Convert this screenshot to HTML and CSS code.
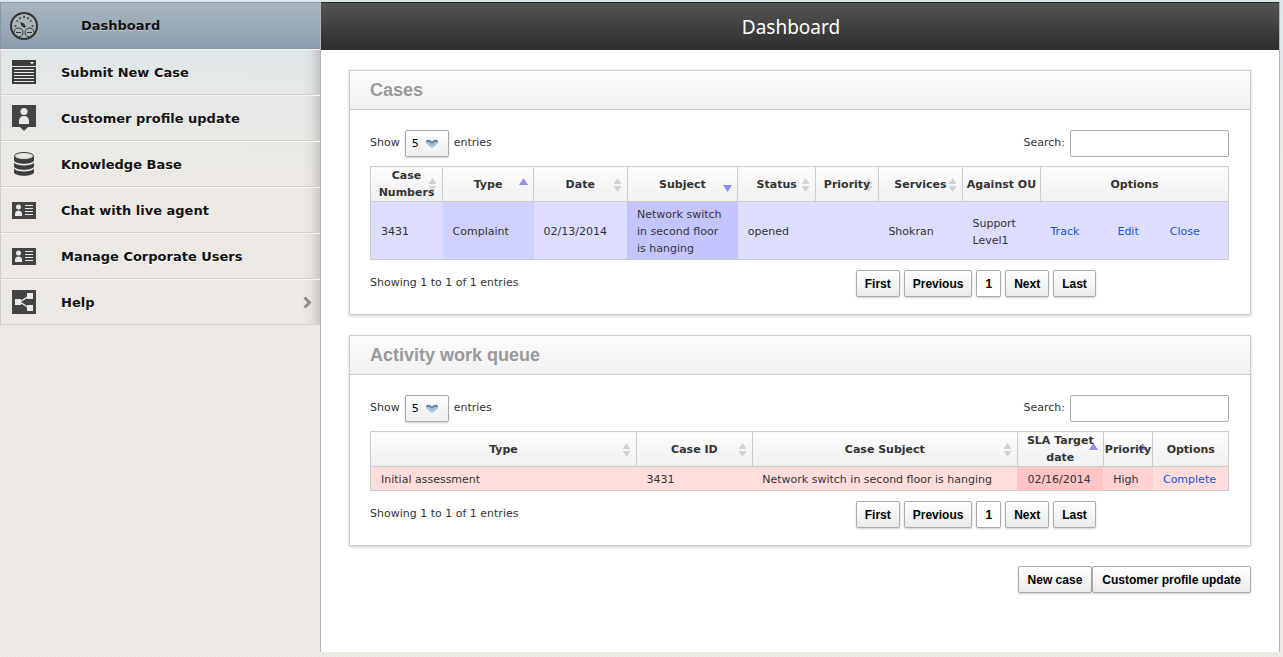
FILE: index.html
```html
<!DOCTYPE html>
<html lang="en">
  <head>
    <meta charset="utf-8" />
    <title>Dashboard</title>
    <link rel="stylesheet" href="styles.css">
  </head>
  <body>
    <!-- Shared icons -->
    <svg class="icon-defs" width="0" height="0">
      <symbol id="sort-both" viewBox="0 0 9 14">
        <path d="M4.500 0L8.500 6H.5zM4.500 14L.5 8h8z" fill="#d2d2d2" />
      </symbol>
      <symbol id="sort-asc" viewBox="0 0 9 14">
        <path d="M4.500 0L9 7H0z" fill="#8f8ff0" />
      </symbol>
      <symbol id="sort-desc" viewBox="0 0 9 14">
        <path d="M0 7h9l-4.500 7z" fill="#8f8ff0" />
      </symbol>
      <symbol id="select-arrow" viewBox="0 0 12 9">
        <path d="M0 3c0-3 4-3 6 0 2-3 6-3 6 0 0 2-3 4-6 6-3-2-6-4-6-6z" fill="#a3c3de" />
        <path d="M0 3c0-3 4-3 6 0 2-3 6-3 6 0v.5C10 2 8 3 6 5 4 3 2 2 0 3.500z" fill="#5f7f9e" />
      </symbol>
      <symbol id="icon-card" viewBox="0 0 24 17">
        <path d="M0 0h24v17H0z" fill="#444" />
        <circle cx="6.500" cy="5" r="2.500" fill="#eceae4" />
        <path d="M3 14v-2c0-2 1.500-3.500 3.500-3.500S10 10 10 12v2z" fill="#eceae4" />
        <path d="M13 3.500h8M13 6.500h8M13 9.500h8M13 12.500h8" stroke="#eceae4" />
      </symbol>
    </svg>

    <div class="page">
      <nav class="sidebar">
        <ul class="menu">
          <li>
            <a href="#" class="menu-link active">
              <span class="menu-icon">
                <svg width="28" height="28" viewBox="0 0 28 28" fill="none" stroke="#333">
                  <circle cx="14" cy="14" r="13" stroke-width="2" fill="#a9b5b8" />
                  <path d="M4.500 14h2M6.500 8.500l1.500 1M9.500 5.500l1 1.500M14 4v2M18.500 5.500l-1 1.500M21.500 8.500l-1.500 1M23.500 14h-2" stroke-width="1.500" />
                  <circle cx="8.500" cy="20.500" r="4.500" />
                  <circle cx="19.500" cy="20.500" r="4.500" />
                  <path d="M6 20.500h5M17 20.500h5" />
                  <path d="M10 10l4 1.500 2 3-1.500 1.500-3-2z" fill="#333" stroke="none" />
                </svg>
              </span>
              <span class="menu-text">Dashboard</span>
            </a>
          </li>
          <li>
            <a href="#" class="menu-link">
              <span class="menu-icon">
                <svg width="24" height="24" viewBox="0 0 24 24">
                  <path d="M0 0h24v6H0zM0 7h24v17H0z" fill="#3c3c3c" />
                  <path d="M18 2h4l-2 2.500z" fill="#eee" />
                  <path d="M2 9.500h20M2 12.500h20M2 15.500h20M2 18.500h20M2 21.500h20" stroke="#e9ebe8" />
                </svg>
              </span>
              <span class="menu-text">Submit New Case</span>
            </a>
          </li>
          <li>
            <a href="#" class="menu-link">
              <span class="menu-icon">
                <svg width="24" height="26" viewBox="0 0 24 26">
                  <path d="M0 0h24v22h-8l-4 4-4-4H0z" fill="#444" />
                  <circle cx="12" cy="6.500" r="3.500" fill="#e9e9e5" />
                  <path d="M7 19v-3c0-3 2-5 5-5s5 2 5 5v3z" fill="#e9e9e5" />
                </svg>
              </span>
              <span class="menu-text">Customer profile update</span>
            </a>
          </li>
          <li>
            <a href="#" class="menu-link">
              <span class="menu-icon">
                <svg width="24" height="24" viewBox="-2 0 24 24">
                  <path d="M0 4v4c0 5 20 5 20 0V4zM0 10.500V14c0 5 20 5 20 0v-3.500c-2 4-18 4-20 0zM0 16.500V20c0 5 20 5 20 0v-3.500c-2 4-18 4-20 0z" fill="#3c3c3c" />
                  <ellipse cx="10" cy="4" rx="9.500" ry="3.500" fill="#e6e5df" stroke="#3c3c3c" />
                </svg>
              </span>
              <span class="menu-text">Knowledge Base</span>
            </a>
          </li>
          <li>
            <a href="#" class="menu-link">
              <span class="menu-icon"><svg width="24" height="17"><use href="#icon-card" /></svg></span>
              <span class="menu-text">Chat with live agent</span>
            </a>
          </li>
          <li>
            <a href="#" class="menu-link">
              <span class="menu-icon"><svg width="24" height="17"><use href="#icon-card" /></svg></span>
              <span class="menu-text">Manage Corporate Users</span>
            </a>
          </li>
          <li>
            <a href="#" class="menu-link">
              <span class="menu-icon">
                <svg width="24" height="24" viewBox="0 0 24 24">
                  <path d="M0 0h24v24H0z" fill="#444" />
                  <path d="M3 9h6v6H3zM15 3h6v6h-6zM15 15h6v6h-6z" fill="#eceae4" />
                  <path d="M17 6l-9 6 9 6" fill="none" stroke="#eceae4" stroke-width="1.500" />
                </svg>
              </span>
              <span class="menu-text">Help</span>
              <svg class="menu-arrow" width="9" height="13" viewBox="0 0 9 13">
                <path d="M1.500 1.500l5 5-5 5" fill="none" stroke="#8d8d8b" stroke-width="3" />
              </svg>
            </a>
          </li>
        </ul>
      </nav>

      <main class="main">
        <header class="main-header">
          <h1>Dashboard</h1>
        </header>

        <div class="content">
          <!-- Cases -->
          <section class="panel">
            <h2 class="panel-title">Cases</h2>
            <div class="panel-body">
              <div class="table-controls">
                <label class="length">Show
                  <span class="select-wrap">
                    <select><option>5</option><option>10</option><option>25</option></select>
                    <svg width="12" height="9"><use href="#select-arrow" /></svg>
                  </span>
                  entries</label>
                <label class="search">Search: <input type="text" /></label>
              </div>
              <table class="data-table cases-table">
                <colgroup>
                  <col class="c-number"><col class="c-type"><col class="c-date"><col class="c-subject">
                  <col class="c-status"><col class="c-priority"><col class="c-services"><col class="c-against">
                  <col class="c-track"><col class="c-edit"><col class="c-close">
                </colgroup>
                <thead>
                  <tr>
                    <th>Case Numbers<svg class="sort"><use href="#sort-both" /></svg></th>
                    <th>Type<svg class="sort"><use href="#sort-asc" /></svg></th>
                    <th>Date<svg class="sort"><use href="#sort-both" /></svg></th>
                    <th>Subject<svg class="sort"><use href="#sort-desc" /></svg></th>
                    <th>Status<svg class="sort"><use href="#sort-both" /></svg></th>
                    <th>Priority<svg class="sort"><use href="#sort-both" /></svg></th>
                    <th>Services<svg class="sort"><use href="#sort-both" /></svg></th>
                    <th>Against OU</th>
                    <th colspan="3">Options</th>
                  </tr>
                </thead>
                <tbody>
                  <tr>
                    <td>3431</td>
                    <td class="sorted-2">Complaint</td>
                    <td>02/13/2014</td>
                    <td class="sorted-1">Network switch in second floor is hanging</td>
                    <td>opened</td>
                    <td></td>
                    <td>Shokran</td>
                    <td>Support Level1</td>
                    <td><a href="#">Track</a></td>
                    <td><a href="#">Edit</a></td>
                    <td><a href="#">Close</a></td>
                  </tr>
                </tbody>
              </table>
              <div class="table-footer">
                <p>Showing 1 to 1 of 1 entries</p>
                <div class="pagination">
                  <button class="btn">First</button>
                  <button class="btn">Previous</button>
                  <button class="btn current">1</button>
                  <button class="btn">Next</button>
                  <button class="btn">Last</button>
                </div>
              </div>
            </div>
          </section>

          <!-- Activity work queue -->
          <section class="panel">
            <h2 class="panel-title">Activity work queue</h2>
            <div class="panel-body">
              <div class="table-controls">
                <label class="length">Show
                  <span class="select-wrap">
                    <select><option>5</option><option>10</option><option>25</option></select>
                    <svg width="12" height="9"><use href="#select-arrow" /></svg>
                  </span>
                  entries</label>
                <label class="search">Search: <input type="text" /></label>
              </div>
              <table class="data-table queue-table">
                <colgroup>
                  <col class="q-type"><col class="q-id"><col class="q-subject">
                  <col class="q-target"><col class="q-priority"><col class="q-options">
                </colgroup>
                <thead>
                  <tr>
                    <th>Type<svg class="sort"><use href="#sort-both" /></svg></th>
                    <th>Case ID<svg class="sort"><use href="#sort-both" /></svg></th>
                    <th>Case Subject<svg class="sort"><use href="#sort-both" /></svg></th>
                    <th>SLA Target date<svg class="sort"><use href="#sort-asc" /></svg></th>
                    <th>Priority<svg class="sort"><use href="#sort-asc" /></svg></th>
                    <th>Options</th>
                  </tr>
                </thead>
                <tbody>
                  <tr>
                    <td>Initial assessment</td>
                    <td>3431</td>
                    <td>Network switch in second floor is hanging</td>
                    <td class="sorted-1">02/16/2014</td>
                    <td class="sorted-2">High</td>
                    <td><a href="#">Complete</a></td>
                  </tr>
                </tbody>
              </table>
              <div class="table-footer">
                <p>Showing 1 to 1 of 1 entries</p>
                <div class="pagination">
                  <button class="btn">First</button>
                  <button class="btn">Previous</button>
                  <button class="btn current">1</button>
                  <button class="btn">Next</button>
                  <button class="btn">Last</button>
                </div>
              </div>
            </div>
          </section>

          <div class="actions">
            <button class="btn">New case</button>
            <button class="btn">Customer profile update</button>
          </div>
        </div>
      </main>
    </div>
  </body>
</html>
```
FILE: styles.css
```css
* {
  margin: 0;
  padding: 0;
  box-sizing: border-box;
}

body {
  font-family: Verdana, "DejaVu Sans", sans-serif;
  font-size: 11px;
  line-height: 17px;
  color: #333;
  background:
    linear-gradient(to bottom, #dce6ea, rgba(220, 230, 234, 0) 180px),
    repeating-conic-gradient(#eae7e1 0 25%, #eeebe6 0 50%) 0 0 / 4px 4px;
}

a {
  color: #15d;
  text-decoration: none;
}

.icon-defs {
  position: absolute;
}

.page {
  display: flex;
  min-height: 100vh;
  padding: 2px 3px 5px 0;
}

/* Sidebar */
.sidebar {
  width: 320px;
  flex-shrink: 0;
}

.menu {
  list-style: none;
}

.menu-link {
  display: flex;
  align-items: center;
  height: 46px;
  padding: 0 8px 0 11px;
  border-top: 1px solid #f4f4f1;
  border-bottom: 1px solid #d0cfcb;
  border-left: 1px solid #ccc;
  background: linear-gradient(to left, rgba(0, 0, 0, 0.14), rgba(0, 0, 0, 0.03) 9px, rgba(0, 0, 0, 0) 18px);
  color: #111;
  font-size: 13px;
  font-weight: bold;
  text-shadow: 0 1px 0 #fff;
}

.menu-link.active {
  height: 47px;
  padding-left: 9px;
  border-color: #8798a5;
  background: linear-gradient(#a8b5bf, #8c9fae);
  text-shadow: 0 1px 1px #c5d0d8;
}

.menu-link.active .menu-icon {
  width: 71px;
}

.menu-icon {
  display: flex;
  width: 49px;
}

.menu-arrow {
  margin-left: auto;
}

/* Main */
.main {
  flex: 1;
  min-width: 0;
  background: #fff;
  border-left: 1px solid #b5b5b5;
  border-right: 1px solid #b5b5b5;
}

.main-header {
  height: 48px;
  padding-right: 18px;
  background: linear-gradient(#555, #2d2d2d);
  border-top: 1px solid #222;
  text-align: center;
}

.main-header h1 {
  font-family: "Noto Sans", sans-serif;
  font-size: 19px;
  font-weight: normal;
  line-height: 48px;
  color: #fff;
}

.content {
  padding: 20px 28px;
}

.panel {
  margin-bottom: 20px;
  border: 1px solid #ccc;
  box-shadow: 0 1px 3px rgba(0, 0, 0, 0.2);
}

.panel-title {
  padding: 0 20px;
  border-bottom: 1px solid #ccc;
  background: linear-gradient(#fdfdfd, #f1f1f1);
  color: #999;
  font-family: Arial, "Liberation Sans", sans-serif;
  font-size: 18px;
  line-height: 38px;
}

.panel-body {
  padding: 20px 21px 17px 20px;
}

.table-controls,
.table-footer {
  display: flex;
  justify-content: space-between;
}

.table-controls {
  margin-bottom: 9px;
}

.table-controls label {
  display: flex;
  gap: 5px;
  line-height: 26px;
}

.select-wrap {
  position: relative;
}

.select-wrap svg {
  position: absolute;
  right: 11px;
  top: 9px;
  pointer-events: none;
}

select,
.search input,
.btn {
  height: 27px;
  border: 1px solid #aaa;
  border-radius: 2px;
}

select {
  display: block;
  width: 44px;
  padding-left: 6px;
  appearance: none;
  background: linear-gradient(#fff, #ededed);
  box-shadow: 0 1px 2px rgba(0, 0, 0, 0.2);
  color: #000;
  font-family: Verdana, "DejaVu Sans", sans-serif;
  font-size: 11px;
}

.search input {
  width: 159px;
  padding: 0 6px;
  background: #fff;
}

/* Tables */
.data-table {
  width: 100%;
  table-layout: fixed;
  border-collapse: collapse;
  border: 1px solid #ccc;
}

.data-table th {
  position: relative;
  z-index: 0;
  height: 35px;
  border: 1px solid #ccc;
  background: linear-gradient(#fdfdfd, #f0f0f0);
}

.data-table td {
  padding: 4px 9px 2px 10px;
}

.sort {
  position: absolute;
  z-index: -1;
  right: 5px;
  top: 11px;
  width: 9px;
  height: 14px;
}

.cases-table tbody tr {
  background: #ddf;
}

.cases-table .sorted-1 {
  background: #c4c4ff;
}

.cases-table .sorted-2 {
  background: #d1d1ff;
}

.queue-table tbody tr {
  background: #fdd;
}

.queue-table .sorted-1 {
  background: #ffc4c4;
}

.queue-table .sorted-2 {
  background: #ffd1d1;
}

.c-number { width: 8.4%; }
.c-type { width: 10.6%; }
.c-date { width: 10.9%; }
.c-subject { width: 12.9%; }
.c-status { width: 9.1%; }
.c-priority { width: 7.3%; }
.c-services { width: 9.8%; }
.c-against { width: 9.1%; }
.c-track { width: 7.8%; }
.c-edit { width: 6.1%; }
.c-close { width: 8%; }

.q-type { width: 31%; }
.q-id { width: 13.5%; }
.q-subject { width: 30.9%; }
.q-target { width: 10%; }
.q-priority { width: 5.8%; }
.q-options { width: 8.8%; }

.table-footer {
  margin-top: 10px;
  line-height: 25px;
}

.pagination {
  display: flex;
  gap: 4px;
  margin-right: 15.5%;
}

.btn {
  padding: 0 9px;
  background: linear-gradient(#fff, #eaeaea);
  box-shadow: 0 1px 2px rgba(0, 0, 0, 0.2);
  color: #000;
  font-family: Arial, "Liberation Sans", sans-serif;
  font-size: 12px;
  font-weight: bold;
  cursor: pointer;
}

.pagination .btn {
  padding: 0 8px;
}

.btn.current {
  background: #fff;
}

.actions {
  display: flex;
  justify-content: flex-end;
}
```
